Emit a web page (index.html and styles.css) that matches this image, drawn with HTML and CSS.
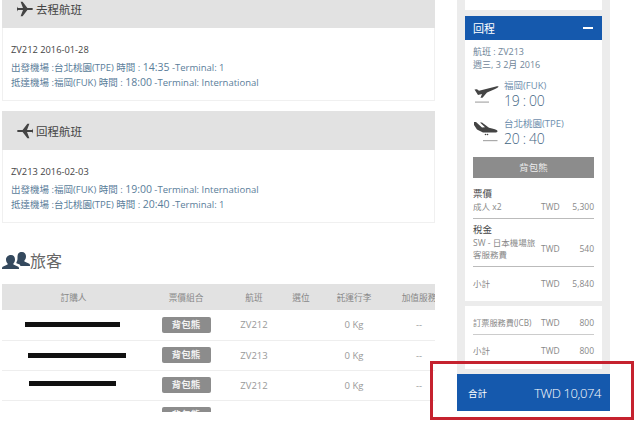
FILE: index.html
```html
<!DOCTYPE html>
<html lang="zh-Hant">
<head>
    <meta charset="UTF-8">
    <title>訂單明細</title>
    <link rel="stylesheet" href="styles.css">
</head>
<body>
    <div class="page">
        <div class="main">
            <section class="flight first">
                <h3 class="flight-head">
                    <svg class="head-icon" viewBox="0 0 20 20"><path d="M1 8.800h6.500L4.500 1H7l6 7.800h4.500c1.500 0 2.500.5 2.500 1.200s-1 1.200-2.500 1.200H13L7 19H4.500l3-7.800H1L0 13V7z"/></svg>
                    <span>去程航班</span>
                </h3>
                <div class="flight-body">
                    <p class="flight-no">ZV212 2016-01-28</p>
                    <p class="flight-line">出發機場 :台北桃園(TPE) 時間 : <span class="time">14:35</span> -Terminal: 1</p>
                    <p class="flight-line">抵達機場 :福岡(FUK) 時間 : <span class="time">18:00</span> -Terminal: International</p>
                </div>
            </section>
            <section class="flight">
                <h3 class="flight-head">
                    <svg class="head-icon" viewBox="0 0 20 20"><path d="M19 8.800h-6.500L15.500 1H13L7 8.800H2.500C1 8.800 0 9.300 0 10s1 1.200 2.500 1.200H7l6 7.800h2.500l-3-7.800H19l1 1.800V7z"/></svg>
                    <span>回程航班</span>
                </h3>
                <div class="flight-body">
                    <p class="flight-no">ZV213 2016-02-03</p>
                    <p class="flight-line">出發機場 :福岡(FUK) 時間 : <span class="time">19:00</span> -Terminal: International</p>
                    <p class="flight-line">抵達機場 :台北桃園(TPE) 時間 : <span class="time">20:40</span> -Terminal: 1</p>
                </div>
            </section>

            <h2 class="pax-title">
                <svg class="pax-icon" viewBox="0 0 28 18"><path d="M9 4c2.600 0 4 2 4 4.400 0 1.800-.8 3.200-1.600 4.200v1l4.400 1.800c.8.300 1.200 1 1.200 1.800V18H0v-.8c0-.8.400-1.500 1.200-1.800l4.400-1.800v-1C4.800 11.600 4 10.200 4 8.400 4 6 6.400 4 9 4z"/><path d="M20 1c2.600 0 4 2 4 4.400 0 1.800-.8 3.200-1.600 4.200v1l4.400 1.800c.8.300 1.200 1 1.200 1.800v.8H18.500l-.8-1.400-3.300-1.400v-.9c.9-1.200 1.100-2.700 1.100-4C15.500 4 15.500 1 20 1z"/></svg>
                <span>旅客</span>
            </h2>
            <div class="pax-wrap">
                <table class="pax-table">
                    <thead>
                        <tr>
                            <th class="col-name">訂購人</th>
                            <th class="col-fare">票價組合</th>
                            <th class="col-flight">航班</th>
                            <th class="col-seat">選位</th>
                            <th class="col-bag">託運行李</th>
                            <th class="col-extra">加值服務</th>
                        </tr>
                    </thead>
                    <tbody>
                        <tr>
                            <td><span class="redact r1"></span></td>
                            <td><span class="fare-tag">背包熊</span></td>
                            <td>ZV212</td>
                            <td></td>
                            <td>0 Kg</td>
                            <td>--</td>
                        </tr>
                        <tr>
                            <td><span class="redact r2"></span></td>
                            <td><span class="fare-tag">背包熊</span></td>
                            <td>ZV213</td>
                            <td></td>
                            <td>0 Kg</td>
                            <td>--</td>
                        </tr>
                        <tr>
                            <td><span class="redact r3"></span></td>
                            <td><span class="fare-tag">背包熊</span></td>
                            <td>ZV212</td>
                            <td></td>
                            <td>0 Kg</td>
                            <td>--</td>
                        </tr>
                        <tr>
                            <td></td>
                            <td><span class="fare-tag">背包熊</span></td>
                            <td></td>
                            <td></td>
                            <td></td>
                            <td></td>
                        </tr>
                    </tbody>
                </table>
            </div>
        </div>

        <aside class="side">
            <div class="side-inner">
                <div class="side-card side-top"></div>
                <div class="side-head">
                    <span>回程</span>
                    <span class="minus"></span>
                </div>
                <div class="side-card trip">
                    <p class="trip-info">航班 : ZV213</p>
                    <p class="trip-info">週三, 3 2月 2016</p>
                    <div class="leg">
                        <svg class="leg-icon" viewBox="0 0 26 22"><path d="M1.500 6.500L4 6.300l2 1.500 15-3.800c2-.7 4.500-1.200 4.500-.4 0 1-2.500 2-4.500 2.800L14 9.500l-4.500 5.200H7.500L9 11l-4 1z"/><rect x="2" y="18.500" width="14" height="1.200" fill="#aaa"/></svg>
                        <div>
                            <p class="leg-place">福岡(FUK)</p>
                            <p class="leg-time">19 : 00</p>
                        </div>
                    </div>
                    <div class="leg">
                        <svg class="leg-icon" viewBox="0 0 26 22"><path d="M1 1h2l6 5.500 3-.2L7 1.500h2l7 5.300 5 1.200c2 .6 3.500 1.300 3.500 2.300s-1 1.200-3 1.200L10 11.500 4 8.500 1 4z"/><circle cx="12.500" cy="13.500" r=".8"/><circle cx="14.500" cy="13.500" r=".8"/><rect x="10" y="19" width="14.500" height="1.200" fill="#aaa"/></svg>
                        <div>
                            <p class="leg-place">台北桃園(TPE)</p>
                            <p class="leg-time">20 : 40</p>
                        </div>
                    </div>
                    <div class="fare-bar">背包熊</div>
                    <div class="price-group">
                        <h4>票價</h4>
                        <div class="price-row"><span class="item">成人 x2</span><span class="cur">TWD</span><span class="amt">5,300</span></div>
                    </div>
                    <div class="price-group">
                        <h4>稅金</h4>
                        <div class="price-row"><span class="item">SW - 日本機場旅客服務費</span><span class="cur">TWD</span><span class="amt">540</span></div>
                    </div>
                    <div class="price-row subtotal"><span class="item">小計</span><span class="cur">TWD</span><span class="amt">5,840</span></div>
                </div>
                <div class="side-card fees">
                    <div class="price-row fee"><span class="item">訂票服務費(JCB)</span><span class="cur">TWD</span><span class="amt">800</span></div>
                    <div class="price-row subtotal"><span class="item">小計</span><span class="cur">TWD</span><span class="amt">800</span></div>
                </div>
            </div>
            <div class="total">
                <span class="total-label">合計</span>
                <span class="total-amt">TWD 10,074</span>
            </div>
        </aside>

        <div class="highlight"></div>
    </div>
</body>
</html>
```
FILE: styles.css
```css
* {
    box-sizing: border-box;
}

html, body {
    margin: 0;
    height: 426px;
    overflow: hidden;
}

body {
    background-color: #fff;
    font-family: "Open Sans", "Noto Sans CJK TC", sans-serif;
    color: #555;
}

p, h2, h3, h4 {
    margin: 0;
    font-weight: normal;
}

.page {
    position: relative;
    display: flex;
    align-items: flex-start;
    height: 426px;
    overflow: hidden;
}

/* left column */
.main {
    width: 433px;
    margin-left: 2px;
    flex: none;
}

.flight {
    margin-bottom: 10px;
}

.flight.first {
    margin-top: -11px;
}

.flight-head {
    display: flex;
    align-items: center;
    gap: 3px;
    height: 39px;
    padding-left: 15px;
    background-color: #e2e2e2;
    font-size: 11.500px;
    color: #444;
}

.head-icon {
    width: 16px;
    height: 16px;
    fill: #444;
}

.flight-body {
    height: 73px;
    padding-top: 14px;
    padding-left: 8px;
    border: 1px solid #f0f0f0;
    border-top: none;
}

.flight-no {
    font-size: 9.300px;
    line-height: 15px;
    margin-bottom: 3px;
    color: #444;
}

.flight-line {
    font-size: 9.500px;
    line-height: 15px;
    color: #5a7d9a;
    white-space: nowrap;
}

.time {
    font-size: 10.500px;
}

.pax-title {
    display: flex;
    align-items: center;
    height: 26px;
    margin-top: 24px;
    margin-bottom: 11px;
    font-size: 16px;
    color: #666;
}

.pax-icon {
    width: 28px;
    height: 18px;
    fill: #34495e;
}

.pax-wrap {
    height: 128px;
    overflow: hidden;
}

.pax-table {
    width: 449px;
    table-layout: fixed;
    border-collapse: collapse;
    font-size: 9.500px;
    color: #999;
    text-align: center;
}

.pax-table th {
    height: 26px;
    padding: 0;
    background-color: #e2e2e2;
    color: #888;
    font-size: 8.700px;
    font-weight: normal;
    white-space: nowrap;
    overflow: hidden;
}

.pax-table td {
    height: 30px;
    padding: 0;
    border-bottom: 1px solid #eee;
}

.col-name { width: 143px; }
.col-fare { width: 82px; }
.col-flight { width: 54px; }
.col-seat { width: 40px; }
.col-bag { width: 66px; }
.col-extra { width: 64px; }

.redact {
    display: block;
    height: 5px;
    background-color: #111;
}

.r1 { width: 95px; margin-left: 23px; }
.r2 { width: 98px; margin-left: 26px; }
.r3 { width: 87px; margin-left: 27px; margin-bottom: 4px; }

.fare-tag {
    display: inline-block;
    width: 49px;
    height: 16px;
    line-height: 16px;
    border-radius: 2px;
    background-color: #8c8c8c;
    color: #f2f2f2;
    font-size: 9.500px;
    font-weight: bold;
    vertical-align: middle;
}

/* right column */
.side {
    width: 153px;
    height: 411px;
    margin-left: 22px;
    flex: none;
    display: flex;
    flex-direction: column;
    background-color: #ececec;
    font-size: 8.500px;
    color: #888;
}

.side-inner {
    flex: 1;
    padding: 0 8px;
}

.side-card {
    background-color: #fff;
    padding: 0 8px;
}

.side-top {
    height: 10px;
    margin-bottom: 6px;
}

.side-head {
    display: flex;
    justify-content: space-between;
    align-items: center;
    height: 24px;
    padding: 0 9px 0 8px;
    background-color: #1559ad;
    color: #fff;
    font-size: 11px;
}

.minus {
    width: 10px;
    height: 2px;
    background-color: #fff;
}

.trip {
    height: 261px;
    padding-top: 5px;
    margin-bottom: 5px;
}

.trip-info {
    font-size: 9px;
    line-height: 13px;
    color: #6f8699;
}

.leg {
    display: flex;
    gap: 5px;
    margin-top: 9px;
    height: 29px;
}

.leg + .leg {
    margin-top: 9px;
}

.leg-icon {
    width: 26px;
    height: 22px;
    margin-top: 3px;
    fill: #444;
    flex: none;
}

.leg-place {
    font-size: 9.500px;
    line-height: 12px;
    color: #6f8fae;
}

.leg-time {
    font-size: 14px;
    font-weight: 300;
    line-height: 18px;
    letter-spacing: -.3px;
    color: #3f6583;
    white-space: nowrap;
}

.fare-bar {
    height: 21px;
    margin-top: 10px;
    margin-bottom: 9px;
    line-height: 21px;
    text-align: center;
    background-color: #8c8c8c;
    color: #eee;
    font-size: 9.500px;
}

.price-group {
    padding-bottom: 5px;
    border-bottom: 1px solid #bbb;
    margin-bottom: 4px;
}

.price-group h4 {
    font-size: 9.500px;
    line-height: 14px;
    color: #444;
}

.price-row {
    display: flex;
    align-items: center;
    min-height: 12px;
    line-height: 12px;
}

.item {
    width: 66px;
    flex: none;
}

.cur {
    width: 28px;
    margin-left: 2px;
    flex: none;
}

.amt {
    flex: 1;
    text-align: right;
}

.subtotal {
    height: 26px;
}

.fees {
    height: 63px;
    padding-top: 5px;
}

.fee {
    height: 24px;
    border-bottom: 1px solid #ccc;
    white-space: nowrap;
}

.fee .item {
    font-size: 8.200px;
}

.fees .subtotal {
    height: 32px;
}

.total {
    display: flex;
    justify-content: space-between;
    align-items: center;
    height: 37px;
    padding: 0 9px 0 11px;
    background-color: #1559ad;
    color: #fff;
}

.total-label {
    font-size: 9.500px;
}

.total-amt {
    font-size: 13px;
    font-weight: 300;
    letter-spacing: -.4px;
}

/* annotation drawn over the screenshot */
.highlight {
    position: absolute;
    left: 430px;
    top: 361px;
    width: 204px;
    height: 59px;
    border: 3px solid #c5222f;
}
```
